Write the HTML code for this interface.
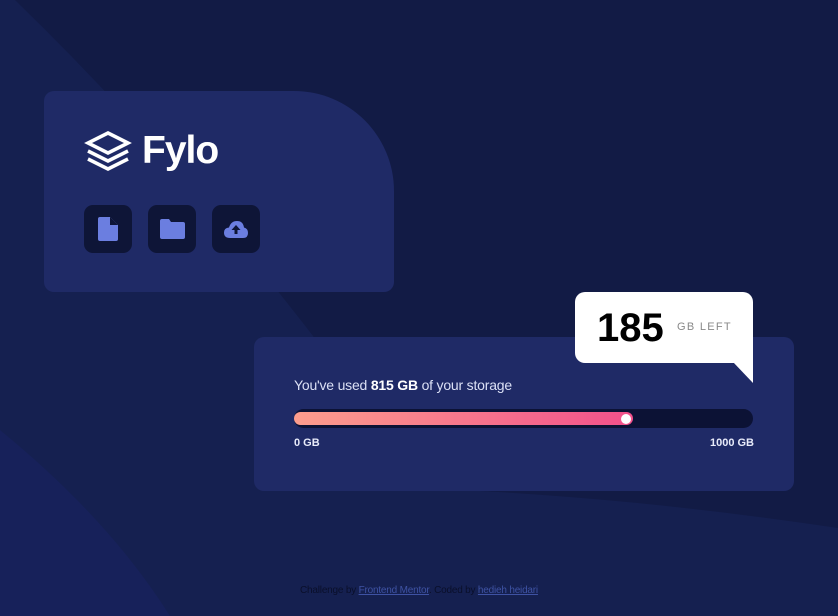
<!DOCTYPE html>
<html><head><meta charset="utf-8"><style>
*{margin:0;padding:0;box-sizing:border-box}
body{width:838px;height:616px;overflow:hidden;background:#121b45;font-family:"Liberation Sans",sans-serif;position:relative}
.bg{position:absolute;left:0;top:0}
.c1{position:absolute;left:44px;top:91px;width:350px;height:201px;background:#1f2a66;border-radius:10px 100px 10px 10px}
.logo{position:absolute;left:40px;top:38px;display:flex;align-items:center}
.logo span{color:#fff;font-size:39px;font-weight:bold;margin-left:10px;letter-spacing:-1px}
.btn{position:absolute;top:114px;width:48px;height:48px;background:#0e1537;border-radius:9px;display:flex;align-items:center;justify-content:center}
.c2{position:absolute;left:254px;top:337px;width:540px;height:154px;background:#1f2a66;border-radius:10px}
.txt{position:absolute;left:40px;top:40px;color:#dbe0f5;font-size:14px;letter-spacing:-0.2px}
.bar{position:absolute;left:40px;top:72px;width:459px;height:19px;background:#0c1235;border-radius:10px}
.fill{position:absolute;left:0;top:3px;width:339px;height:13px;border-radius:7px;background:linear-gradient(90deg,#fc9d8d,#f2508b)}
.knob{position:absolute;right:2px;top:2px;width:10px;height:10px;border-radius:50%;background:#fff}
.l{position:absolute;top:100px;color:#e8ebfa;font-size:11px;font-weight:bold}
.bub{position:absolute;left:575px;top:292px;width:178px;height:71px;background:#fff;border-radius:10px 10px 0 10px}
.tail{position:absolute;left:733px;top:362px;width:0;height:0;border-top:21px solid #fff;border-left:20px solid transparent}
.big{position:absolute;left:22px;top:14px;font-size:40px;font-weight:bold;color:#000}
.gl{position:absolute;left:102px;top:29px;font-size:11px;letter-spacing:1.3px;color:#888}
.foot{position:absolute;top:585px;left:0;width:838px;text-align:center;font-size:10px;color:#0a0f2a;letter-spacing:-0.2px}
.foot a{color:#3e52a3;text-decoration:underline}
</style></head><body>
<svg class="bg" width="838" height="616">
<path d="M0 0 L15 0 Q170 150 320 345 L480 491 Q650 500 838 528 L838 616 L0 616 Z" fill="#152050"/>
<path d="M0 430 Q110 520 170 616 L0 616 Z" fill="#17215a"/>
</svg>
<div class="c1">
<div class="logo"><svg width="48" height="44" viewBox="0 0 48 44" fill="none" stroke="#fff" stroke-width="3.5" stroke-linejoin="miter"><path d="M24 4 L44 14 L24 24 L4 14 Z"/><path d="M4 22 L24 32 L44 22"/><path d="M4 30 L24 40 L44 30"/></svg><span>Fylo</span></div>
<div class="btn" style="left:40px"><svg width="20" height="24" viewBox="0 0 20 24"><path d="M2 0 H12 L20 8 V22 Q20 24 18 24 H2 Q0 24 0 22 V2 Q0 0 2 0Z" fill="#6b7ee0"/><path d="M12 0 V8 H20Z" fill="#0e1537"/></svg></div>
<div class="btn" style="left:104px"><svg width="25" height="20" viewBox="0 0 25 20"><path d="M0 2 Q0 0 2 0 H9 L11 3 H23 Q25 3 25 5 V18 Q25 20 23 20 H2 Q0 20 0 18Z" fill="#6b7ee0"/></svg></div>
<div class="btn" style="left:168px"><svg width="24" height="17" viewBox="0 0 24 17"><path d="M6 17 Q0 17 0 11.5 Q0 7 5 6.5 Q7 0 13 0 Q19 0 20 6.5 Q24 7.5 24 12 Q24 17 19 17Z" fill="#6b7ee0"/><path d="M12 4 L16.5 9 H13.5 V13 H10.5 V9 H7.5Z" fill="#0e1537"/></svg></div>
</div>
<div class="c2">
<div class="txt">You've used <b style="color:#fff">815 GB</b> of your storage</div>
<div class="bar"><div class="fill"><div class="knob"></div></div></div>
<div class="l" style="left:40px">0 GB</div>
<div class="l" style="right:40px">1000 GB</div>
</div>
<div class="bub"><div class="big">185</div><div class="gl">GB LEFT</div></div>
<div class="tail"></div>
<div class="foot">Challenge by <a>Frontend Mentor</a>. Coded by <a>hedieh heidari</a></div>
</body></html>
